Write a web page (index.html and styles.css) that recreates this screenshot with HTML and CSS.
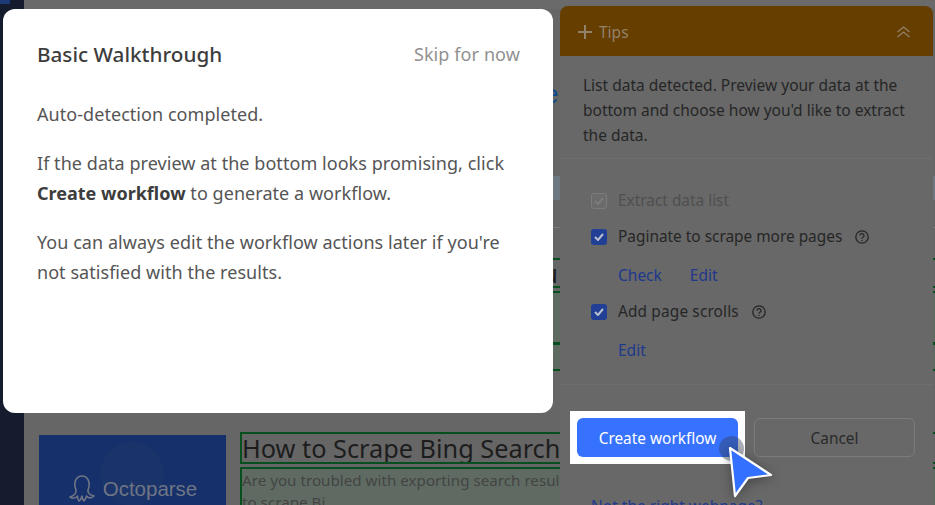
FILE: index.html
```html
<!DOCTYPE html>
<html lang="en">
<head>
<meta charset="utf-8">
<title>Basic Walkthrough</title>
<link rel="stylesheet" href="styles.css">
</head>
<body>
<div class="app">
  <aside class="sidebar"><div class="sidebar-tab"></div></aside>
  <main class="page">
    <div class="page-bar"></div>
    <div class="frag-heading">e</div>
    <div class="frag-image"></div>
    <div class="frag-rule"></div>
    <div class="result first">
      <div class="result-title"><span class="title-end">How to Scrape Data You</span></div>
      <div class="result-desc">
        <div class="desc-text">Read the guide</div>
        <div class="desc-bar"></div>
      </div>
    </div>
    <div class="result last">
      <div class="thumb">
        <div class="thumb-glow"></div>
        <svg class="thumb-logo" width="28" height="28" viewBox="0 0 28 28" fill="none" stroke="#6f7584" stroke-width="1.6" stroke-linecap="round" stroke-linejoin="round"><path d="M7 15C4 8 7 1 13 1S22 8 19 15C18.500 18 21 20 25 21C22 24 19 23 17.500 21C17 23 16 25 15 26C14 25 13 23 13 21C12.500 23 11.500 25 10 26C9 25 8.500 23 8.500 21C7 23 4 24 1 22C4 21 7.500 19 7 15z"/></svg>
        <span class="thumb-name">Octoparse</span>
      </div>
      <div class="result-body">
        <div class="result-title big">How to Scrape Bing Search Results</div>
        <div class="result-desc tinted">Are you troubled with exporting search results from a search engine?<br>to scrape Bi</div>
      </div>
    </div>
  </main>
</div>

<section class="panel">
  <header class="panel-head">
    <span class="panel-title">
      <svg width="14" height="14" viewBox="0 0 14 14" fill="none" stroke="#93816a" stroke-width="2"><path d="M7 0v14M0 7h14"/></svg>
      Tips
    </span>
    <svg width="13" height="12" viewBox="0 0 13 12" fill="none" stroke="#93816a" stroke-width="1.3"><path d="M.5 6l6-5 6 5M.5 11l6-5 6 5"/></svg>
  </header>
  <p class="panel-intro">List data detected. Preview your data at the bottom and choose how you'd like to extract the data.</p>
  <div class="options">
    <div class="option muted">
      <span class="check off"><svg width="10" height="8" viewBox="0 0 10 8" fill="none" stroke="#7c7c7c" stroke-width="2"><path d="M1 4l3 3 5-6"/></svg></span>
      Extract data list
    </div>
    <div class="option">
      <span class="check"><svg width="10" height="8" viewBox="0 0 10 8" fill="none" stroke="#b9bfd0" stroke-width="2"><path d="M1 4l3 3 5-6"/></svg></span>
      Paginate to scrape more pages
      <svg class="help" width="14" height="14" viewBox="0 0 14 14" fill="none" stroke="#262626" stroke-width="1.3"><circle cx="7" cy="7" r="6.2"/><path d="M5 5.600a2 2 0 1 1 3 1.700c-.7.400-1 .8-1 1.500"/><path d="M7 10v1"/></svg>
    </div>
    <div class="links"><a>Check</a><a>Edit</a></div>
    <div class="option">
      <span class="check"><svg width="10" height="8" viewBox="0 0 10 8" fill="none" stroke="#b9bfd0" stroke-width="2"><path d="M1 4l3 3 5-6"/></svg></span>
      <span class="wide-label">Add page scrolls</span>
      <svg class="help" width="14" height="14" viewBox="0 0 14 14" fill="none" stroke="#262626" stroke-width="1.3"><circle cx="7" cy="7" r="6.2"/><path d="M5 5.600a2 2 0 1 1 3 1.700c-.7.400-1 .8-1 1.500"/><path d="M7 10v1"/></svg>
    </div>
    <div class="links"><a>Edit</a></div>
  </div>
  <div class="actions">
    <div class="spot"><button class="btn-primary">Create workflow</button></div>
    <button class="btn-cancel">Cancel</button>
  </div>
  <a class="wrong-page">Not the right webpage?</a>
</section>

<div class="dialog">
  <div class="dialog-head">
    <h2>Basic Walkthrough</h2>
    <span class="skip">Skip for now</span>
  </div>
  <p>Auto-detection completed.</p>
  <p>If the data preview at the bottom looks promising, click <b>Create workflow</b> to generate a workflow.</p>
  <p>You can always edit the workflow actions later if you're not satisfied with the results.</p>
</div>

<div class="pulse"></div>
<svg class="pointer" width="52" height="58" viewBox="0 0 52 58"><path d="M4 4L45 31 22 34 9 52z" fill="#3370ff" stroke="#fff" stroke-width="2.2" stroke-linejoin="round"/></svg>
</body>
</html>
```
FILE: styles.css
```css
* { box-sizing: border-box; }
html, body { margin: 0; height: 100%; overflow: hidden; }
body {
  background: #666;
  font-family: "Noto Sans", "Open Sans", sans-serif;
  color: #333;
  position: relative;
}
.app { display: flex; height: 505px; overflow: hidden; }
.sidebar { width: 24px; flex: none; background: #141c2e; }
.sidebar-tab { width: 10px; height: 4px; background: #1d3a78; }
.page { flex: 1; min-width: 0; background: #666; display: flex; flex-direction: column; }
.page-bar { height: 9px; background: #6a6a6a; flex: none; }
.frag-heading {
  font: 26px/30px "Liberation Sans", sans-serif;
  color: #0e4a8e;
  margin: 70px 0 0 520px;
  height: 30px;
}
.frag-image { margin: 67px 0 0 510px; height: 24px; background: #6d7882; flex: none; }
.frag-rule { margin-top: 27px; height: 1px; background: #7a7a7a; flex: none; }
.result { flex: none; }
.result.first { margin-top: 30px; }
.result-title {
  border-top: 2px solid #06501f;
  border-bottom: 2px solid #06501f;
  height: 30px;
  font: 25.3px/26px "Noto Sans", sans-serif;
  color: #1d1d1d;
  white-space: nowrap;
  overflow: hidden;
}
.title-end { display: inline-block; width: 534px; text-align: right; }
.result-desc { margin-top: 3px; border-top: 2px solid #06501f; background: #5f6b62; height: 80px; display: flex; flex-direction: column; }
.desc-text { font: 15.2px/22px "Noto Sans", sans-serif; color: #444; padding-left: 415px; margin-top: 4px; height: 46px; }
.desc-bar { height: 3px; background: #06501f; }
.result-desc::after { content: ""; margin-top: 24px; height: 2px; background: #06501f; }
.result.last { margin-top: 64px; display: flex; gap: 14px; padding-left: 15px; }
.thumb { width: 187px; height: 120px; background: #15306a; position: relative; flex: none; display: flex; align-items: center; justify-content: center; gap: 6px; padding: 0 0 12px 1px; }
.thumb-glow { position: absolute; left: 61px; top: 7px; width: 64px; height: 64px; border-radius: 50%; background: #1a3369; }
.thumb-logo { position: relative; }
.thumb-name { position: relative; font: 20.5px/24px "Liberation Sans", sans-serif; color: #6f7584; }
.result-body { flex: 1; min-width: 0; }
.result-title.big { border: 2px solid #06501f; border-right: 0; height: 32px; margin-top: -3px; line-height: 29px; }
.result-desc.tinted { display: block; border-left: 2px solid #06501f; margin-top: 3px; font: 15.2px/22px "Noto Sans", sans-serif; color: #444; height: 60px; white-space: nowrap; overflow: hidden; }
.result-desc.tinted::after { display: none; }

.panel {
  position: absolute;
  left: 560px;
  top: 6px;
  width: 373px;
  height: 520px;
  background: #686868;
  border-radius: 8px 8px 0 0;
  font-size: 15.4px;
  color: #262626;
}
.panel-head {
  height: 50px;
  background: #653e00;
  border-radius: 8px 8px 0 0;
  display: flex;
  align-items: center;
  justify-content: space-between;
  padding: 1px 23px 0 18px;
}
.panel-title { display: flex; align-items: center; gap: 7px; font-size: 15.5px; color: #93816a; }
.panel-intro { margin: 0; padding: 17px 18px 10px 23px; height: 103px; font-size: 15.5px; line-height: 25px; border-bottom: 1px solid #6e6e6e; }
.options { padding: 30px 0 0 31px; height: 226px; border-bottom: 1px solid #6e6e6e; }
.option { display: flex; align-items: center; gap: 11px; height: 24px; margin-bottom: 12px; line-height: 24px; }
.option.muted { color: #4f4f4f; }
.check { width: 16px; height: 16px; border-radius: 3px; background: #213f94; display: flex; align-items: center; justify-content: center; flex: none; }
.check.off { background: #6b6b6b; border: 1px solid #7c7c7c; }
.wide-label { letter-spacing: .15px; }
.help { margin-left: 2px; }
.links { display: flex; gap: 28px; padding-left: 27px; height: 24px; margin: 14px 0 13px; line-height: 24px; font-size: 15.5px; color: #21398c; }
.actions { display: flex; align-items: flex-start; gap: 9px; padding: 26px 0 0 10px; }
.spot { background: #fff; padding: 7px; flex: none; }
.btn-primary {
  display: block;
  width: 161px;
  height: 39px;
  padding: 1px 0 0;
  background: #3772ff;
  color: #fff;
  border: 0;
  border-radius: 6px;
  font: 15.4px "Noto Sans", sans-serif;
}
.btn-cancel {
  margin-top: 7px;
  width: 161px;
  height: 39px;
  padding: 1px 0 0;
  background: transparent;
  border: 1px solid #7c7c7c;
  border-radius: 6px;
  color: #2a2a2a;
  font: 15.4px "Noto Sans", sans-serif;
}
.wrong-page { display: block; margin: 31px 0 0 31px; font-size: 15.5px; color: #21398c; text-decoration: underline; }

.dialog {
  position: absolute;
  left: 3px;
  top: 9px;
  width: 550px;
  height: 404px;
  background: #fff;
  border-radius: 12px;
  padding: 27px 33px 0 34px;
  font-size: 18px;
  letter-spacing: .05px;
  line-height: 30px;
  color: #555;
}
.dialog-head { display: flex; justify-content: space-between; align-items: center; height: 36px; margin-bottom: 27px; }
.dialog h2 { margin: 0; font-size: 20.7px; font-weight: 500; letter-spacing: 0; color: #3d3d3d; }
.skip { color: #919191; letter-spacing: .1px; }
.dialog p { margin: 0 0 19px; }
.dialog b { font-weight: 700; letter-spacing: 0; color: #3d3d3d; }

.pulse { position: absolute; left: 719px; top: 436px; width: 25px; height: 25px; border-radius: 50%; background: rgba(50, 60, 80, .4); }
.pointer { position: absolute; left: 726px; top: 444px; filter: drop-shadow(0 2px 6px rgba(0,0,0,.35)); }
```
